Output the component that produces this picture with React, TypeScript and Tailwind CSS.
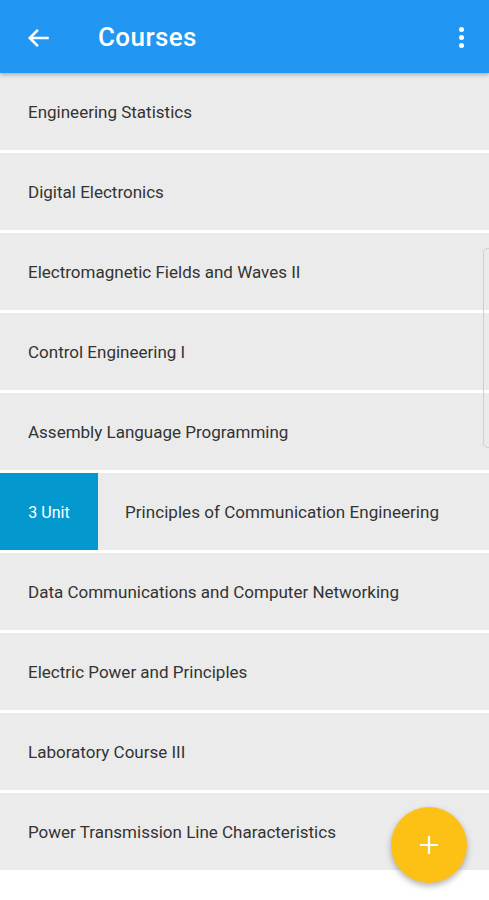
import React from "react";

const courses: { name: string; units?: string }[] = [
    {name: "Engineering Statistics"},
    {name: "Digital Electronics"},
    {name: "Electromagnetic Fields and Waves II"},
    {name: "Control Engineering I"},
    {name: "Assembly Language Programming"},
    {name: "Principles of Communication Engineering", units: "3 Unit"},
    {name: "Data Communications and Computer Networking"},
    {name: "Electric Power and Principles"},
    {name: "Laboratory Course III"},
    {name: "Power Transmission Line Characteristics"},
];

export default function App() {
    return (
        <div className="relative w-[489px] h-[900px] overflow-hidden bg-white font-['Roboto',sans-serif]">
            <header className="relative z-10 flex items-center h-[73px] bg-[#2196f3] text-white shadow-[0_2px_4px_rgba(0,0,0,0.25)]">
                <svg className="ml-[26px] mt-[2px]" width="26" height="26" viewBox="0 0 24 24" fill="none" stroke="white"
                     strokeWidth="2.4">
                    <path d="M21 12H4M11 4.5L3.5 12l7.5 7.5"/>
                </svg>
                <h1 className="ml-[46px] mt-[2px] text-[26px] font-medium tracking-[0.4px]">Courses</h1>
                <div className="ml-auto mr-[25px] mt-[2px] flex flex-col gap-[3px]">
                    <span className="w-[5px] h-[5px] rounded-full bg-white"/>
                    <span className="w-[5px] h-[5px] rounded-full bg-white"/>
                    <span className="w-[5px] h-[5px] rounded-full bg-white"/>
                </div>
            </header>

            <ul className="flex flex-col gap-[3px]">
                {courses.map((c) => (
                    <li key={c.name} className="flex items-stretch h-[77px] bg-[#ebebeb] text-[17px] text-[#333333]">
                        {c.units && (
                            <div className="flex items-center justify-center w-[98px] pt-[2px] bg-[#0399cf] text-[16px] text-white">
                                {c.units}
                            </div>
                        )}
                        <div className={c.units ? "flex items-center pt-[3px] pl-[27px] tracking-[0.05px]" : "flex items-center pt-[3px] pl-[28px]"}>
                            {c.name}
                        </div>
                    </li>
                ))}
            </ul>

            {/* fast scroll track */}
            <div className="absolute left-[483px] top-[248px] w-[12px] h-[200px] rounded-[5px] border border-[#cfcfcf]"/>

            <button
                className="absolute left-[391px] top-[807px] flex items-center justify-center w-[76px] h-[76px] rounded-full bg-[#fdc116] shadow-[0_3px_6px_rgba(0,0,0,0.3)]">
                <svg width="22" height="22" viewBox="0 0 22 22" stroke="white" strokeWidth="2.2">
                    <path d="M11 2v18M2 11h18"/>
                </svg>
            </button>
        </div>
    );
}
